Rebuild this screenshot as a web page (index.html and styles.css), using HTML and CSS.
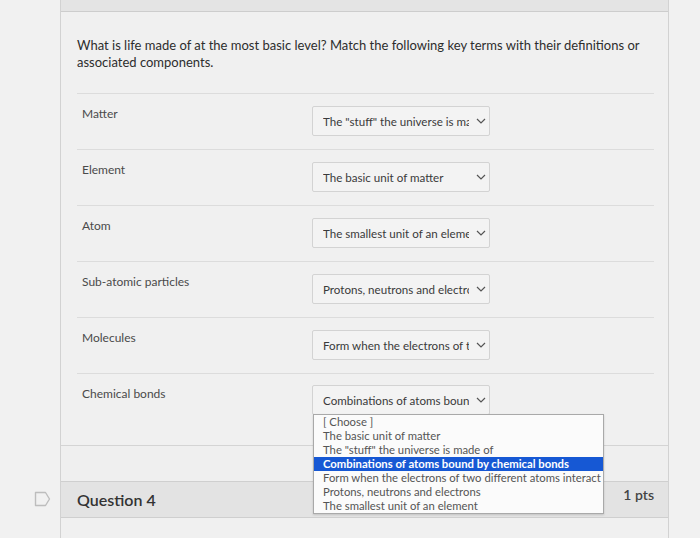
FILE: index.html
```html
<!DOCTYPE html>
<html>
<head>
<meta charset="utf-8">
<link rel="stylesheet" href="styles.css">
</head>
<body>
<div class="page">
  <div class="gutter">
    <div class="flag-slot">
      <svg class="flag" width="17" height="16" viewBox="0 0 17 16"><path d="M1.5 1.5 H11.5 L15.5 8 L11.5 14.5 H1.5 Z" fill="none" stroke="#bdbdbd" stroke-width="1.4" stroke-linejoin="round"/></svg>
    </div>
  </div>
  <div class="quiz">
    <div class="question">
      <div class="q-top"></div>
      <div class="q-body">
        <p class="q-text">What is life made of at the most basic level? Match the following key terms with their definitions or associated components.</p>
        <div class="matches">
          <div class="match">
            <div class="term">Matter</div>
            <div class="select"><span class="sel-text">The &quot;stuff&quot; the universe is made of</span><svg class="chev" width="10" height="6" viewBox="0 0 10 6"><path d="M1 1 L5 5 L9 1" fill="none" stroke="#555" stroke-width="1.2"/></svg></div>
          </div>
          <div class="match">
            <div class="term">Element</div>
            <div class="select"><span class="sel-text">The basic unit of matter</span><svg class="chev" width="10" height="6" viewBox="0 0 10 6"><path d="M1 1 L5 5 L9 1" fill="none" stroke="#555" stroke-width="1.2"/></svg></div>
          </div>
          <div class="match">
            <div class="term">Atom</div>
            <div class="select"><span class="sel-text">The smallest unit of an element</span><svg class="chev" width="10" height="6" viewBox="0 0 10 6"><path d="M1 1 L5 5 L9 1" fill="none" stroke="#555" stroke-width="1.2"/></svg></div>
          </div>
          <div class="match">
            <div class="term">Sub-atomic particles</div>
            <div class="select"><span class="sel-text">Protons, neutrons and electrons</span><svg class="chev" width="10" height="6" viewBox="0 0 10 6"><path d="M1 1 L5 5 L9 1" fill="none" stroke="#555" stroke-width="1.2"/></svg></div>
          </div>
          <div class="match">
            <div class="term">Molecules</div>
            <div class="select"><span class="sel-text">Form when the electrons of two different atoms interact</span><svg class="chev" width="10" height="6" viewBox="0 0 10 6"><path d="M1 1 L5 5 L9 1" fill="none" stroke="#555" stroke-width="1.2"/></svg></div>
          </div>
          <div class="match last">
            <div class="term">Chemical bonds</div>
            <div class="select open"><span class="sel-text">Combinations of atoms bound by chemical bonds</span><svg class="chev" width="10" height="6" viewBox="0 0 10 6"><path d="M1 1 L5 5 L9 1" fill="none" stroke="#555" stroke-width="1.2"/></svg>
              <ul class="options">
                <li>[ Choose ]</li>
                <li>The basic unit of matter</li>
                <li>The &quot;stuff&quot; the universe is made of</li>
                <li class="selected">Combinations of atoms bound by chemical bonds</li>
                <li>Form when the electrons of two different atoms interact</li>
                <li>Protons, neutrons and electrons</li>
                <li>The smallest unit of an element</li>
              </ul>
            </div>
          </div>
        </div>
      </div>
    </div>
    <div class="question next">
      <div class="q-head">
        <span class="q-title">Question 4</span>
        <span class="q-pts">1 pts</span>
      </div>
      <div class="q-rest"></div>
    </div>
  </div>
</div>
</body>
</html>
```
FILE: styles.css
```css
html, body {
  margin: 0;
  padding: 0;
}
body {
  background: #f1f1f1;
  font-family: Lato, "Liberation Sans", sans-serif;
  color: #333;
  height: 538px;
  overflow: hidden;
}
.page {
  display: flex;
  height: 538px;
}
.gutter {
  width: 60px;
  flex: none;
  display: flex;
  flex-direction: column;
}
.flag-slot {
  margin-top: 491px;
  padding-left: 34px;
  height: 17px;
}
.flag {
  display: block;
}
.quiz {
  width: 607px;
  flex: none;
  border-left: 1px solid #d2d2d2;
  border-right: 1px solid #d2d2d2;
  background: #efefef;
  display: flex;
  flex-direction: column;
}
.q-top {
  height: 11px;
  background: #e4e4e4;
  border-bottom: 1px solid #cdcdcd;
}
.q-body {
  padding: 25px 14px 16px 16px;
  border-bottom: 1px solid #d4d4d4;
  background: #f0f0f0;
}
.q-text {
  margin: 0;
  font-size: 13px;
  line-height: 17px;
  color: #2d2d2d;
  width: 578px;
}
.matches {
  margin-top: 22px;
  border-top: 1px solid #dcdcdc;
}
.match {
  height: 55px;
  border-bottom: 1px solid #dcdcdc;
  display: flex;
  align-items: flex-start;
}
.match.last {
  border-bottom: none;
}
.term {
  width: 230px;
  padding-left: 5px;
  padding-top: 12px;
  font-size: 12px;
  line-height: 15px;
  color: #4a4a4a;
}
.select {
  position: relative;
  margin-top: 12px;
  height: 28px;
  border: 1px solid #d3d3d3;
  border-radius: 2px;
  background: #f3f3f3;
  display: flex;
  align-items: center;
  padding-left: 10px;
  width: 166px;
}
.match.last .select {
  margin-top: 11px;
}
.sel-text {
  width: 146px;
  overflow: hidden;
  white-space: nowrap;
  font-size: 11.6px;
  color: #3a3a3a;
}
.chev {
  margin-left: 7px;
  display: block;
}
.options {
  position: absolute;
  top: 28px;
  left: 0;
  width: 289px;
  margin: 0;
  padding: 0;
  list-style: none;
  background: #fbfbfb;
  border: 1px solid #a9a9a9;
  box-shadow: 0 1px 2px rgba(0,0,0,0.15);
  z-index: 2;
}
.options li {
  font-size: 11.3px;
  line-height: 14px;
  height: 14px;
  padding-left: 9px;
  color: #555;
  white-space: nowrap;
  overflow: hidden;
}
.options li.selected {
  background: #1658d4;
  color: #fff;
  font-weight: 700;
}
.next {
  margin-top: 35px;
  flex: 1;
  display: flex;
  flex-direction: column;
}
.q-head {
  height: 35px;
  background: #e3e3e3;
  border-top: 1px solid #cfcfcf;
  border-bottom: 1px solid #cfcfcf;
  display: flex;
  justify-content: space-between;
  padding: 0 14px 0 16px;
}
.q-title {
  font-size: 16px;
  font-weight: 600;
  color: #333;
  line-height: 35px;
}
.q-pts {
  font-size: 14px;
  font-weight: 600;
  color: #444;
  line-height: 25px;
}
.q-rest {
  flex: 1;
  background: #f0f0f0;
}
```
